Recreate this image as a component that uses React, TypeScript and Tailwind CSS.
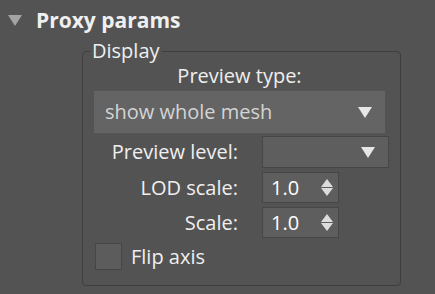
import React from 'react';

const DownArrow = ({ className }: { className?: string }) => (
  <svg className={className} width="14" height="11" viewBox="0 0 14 11">
    <path d="M0 0 H14 L7 11 Z" fill="currentColor" />
  </svg>
);

const Spinner = ({ value }: { value: string }) => (
  <div className="flex items-center w-[77px] h-[31px] bg-[#5e5e5e] border border-[#464646] pl-[8px] pr-[5px]">
    <span className="flex-1 text-[20px] text-white leading-none">{value}</span>
    <div className="flex flex-col gap-[1px] text-[#dcdcdc]">
      <svg width="12" height="8" viewBox="0 0 12 8">
        <path d="M0 8 L6 0 L12 8 Z" fill="currentColor" />
      </svg>
      <svg width="12" height="8" viewBox="0 0 12 8">
        <path d="M0 0 H12 L6 8 Z" fill="currentColor" />
      </svg>
    </div>
  </div>
);

const App = () => {
  return (
    <div className="w-[435px] h-[294px] bg-[#535353] text-[#efefef] font-['Open_Sans',sans-serif] overflow-hidden">
      {/* Rollout header */}
      <div className="flex items-center h-[40px] pl-[8px] gap-[14px]">
        <DownArrow className="text-[#a3a3a3]" />
        <span className="text-[21px] font-bold leading-none">Proxy params</span>
      </div>

      {/* Display group */}
      <fieldset className="ml-[82px] w-[319px] h-[246px] border border-[#3e3e3e] rounded-[4px] px-[11px]">
        <legend className="ml-[-4px] px-[2px] text-[20px] leading-[22px]">Display</legend>

        <div className="text-center text-[20px] leading-[26px] mt-[1px] pr-[4px]">Preview type:</div>

        <div className="flex items-center h-[42px] w-[291px] mt-[2px] bg-[#646464] pl-[11px] pr-[13px]">
          <span className="flex-1 text-[20px] text-[#d4d4d4] leading-none">show whole mesh</span>
          <DownArrow className="text-[#e6e6e6]" />
        </div>

        <div className="grid grid-cols-[144px_auto] gap-x-[24px] gap-y-[4px] mt-[3px] items-center">
          <span className="text-right text-[20px] leading-none">Preview level:</span>
          <div className="flex items-center justify-end w-[127px] h-[32px] bg-[#5e5e5e] border border-[#464646] pr-[13px]">
            <DownArrow className="text-[#e6e6e6]" />
          </div>

          <span className="text-right text-[20px] leading-none">LOD scale:</span>
          <Spinner value="1.0" />

          <span className="text-right text-[20px] leading-none">Scale:</span>
          <Spinner value="1.0" />
        </div>

        <label className="flex items-center gap-[9px] mt-[5px] ml-[1px]">
          <span className="w-[27px] h-[27px] bg-[#5c5c5c] border border-[#464646]" />
          <span className="text-[20px] leading-none">Flip axis</span>
        </label>
      </fieldset>
    </div>
  );
};

export default App;
